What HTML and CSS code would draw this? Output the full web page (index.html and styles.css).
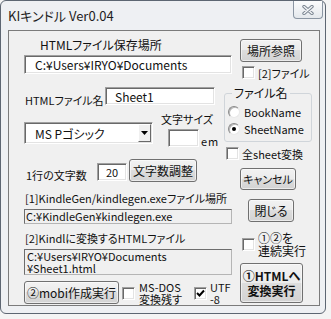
FILE: index.html
```html
<!DOCTYPE html>
<html lang="ja">
<head>
    <meta charset="UTF-8">
    <title>KIキンドル Ver0.04</title>
    <link rel="stylesheet" href="styles.css">
</head>
<body>
    <div class="window">
        <div class="titlebar">
            <span class="title">KIキンドル Ver0.04</span>
            <div class="close-btn">
                <svg width="12" height="10" viewBox="0 0 12 10">
                    <path d="M2 1.5 L10 8.5 M10 1.5 L2 8.5" stroke="#7b8591" stroke-width="3.4" stroke-linecap="round"/>
                    <path d="M2 1.5 L10 8.5 M10 1.5 L2 8.5" stroke="#f4f6f8" stroke-width="1.4" stroke-linecap="round"/>
                </svg>
            </div>
        </div>
        <div class="client">
            <div class="col-left">
                <div class="label save-label">HTMLファイル保存場所</div>
                <div class="textbox path-box">C:¥Users¥IRYO¥Documents</div>

                <div class="name-row">
                    <span class="label name-label">HTMLファイル名</span>
                    <div class="textbox name-box">Sheet1</div>
                </div>

                <div class="font-row">
                    <div class="textbox combo">
                        <span class="combo-text">MS Pゴシック</span>
                        <span class="combo-btn">
                            <svg width="7" height="4" viewBox="0 0 7 4"><polygon points="0,0 7,0 3.5,4" fill="#000"/></svg>
                        </span>
                    </div>
                    <div class="size-group">
                        <div class="label">文字サイズ</div>
                        <div class="size-row">
                            <div class="textbox size-box"></div>
                            <span class="em">em</span>
                        </div>
                    </div>
                </div>

                <div class="count-row">
                    <span class="label count-label">1行の文字数</span>
                    <div class="textbox count-box">20</div>
                    <button class="btn count-btn">文字数調整</button>
                </div>

                <div class="label kg-label">[1]KindleGen/kindlegen.exeファイル場所</div>
                <div class="readonly kg-box">C:¥KindleGen¥kindlegen.exe</div>

                <div class="label html-label">[2]Kindlに変換するHTMLファイル</div>
                <div class="readonly html-box">C:¥Users¥IRYO¥Documents<br>¥Sheet1.html</div>

                <div class="bottom-row">
                    <button class="btn mobi-btn">②mobi作成実行</button>
                    <label class="check-row dos-check">
                        <span class="check"></span>
                        <span class="two-line dos-text">MS-DOS<br>変換残す</span>
                    </label>
                    <label class="check-row utf-check">
                        <span class="check">
                            <svg width="9" height="9" viewBox="0 0 9 9"><polyline points="1,4 3.5,6.5 8,1.5" fill="none" stroke="#000" stroke-width="2"/></svg>
                        </span>
                        <span class="two-line">UTF<br>-8</span>
                    </label>
                </div>
            </div>

            <div class="col-right">
                <button class="btn browse-btn">場所参照</button>
                <label class="check-row file-check">
                    <span class="check"></span>
                    <span class="label">[2]ファイル</span>
                </label>

                <fieldset class="group">
                    <legend>ファイル名</legend>
                    <label class="radio-row first">
                        <span class="radio"></span>
                        <span>BookName</span>
                    </label>
                    <label class="radio-row">
                        <span class="radio checked"></span>
                        <span>SheetName</span>
                    </label>
                </fieldset>

                <label class="check-row all-check">
                    <span class="check"></span>
                    <span class="label">全sheet変換</span>
                </label>

                <button class="btn cancel-btn">キャンセル</button>
                <button class="btn shut-btn">閉じる</button>

                <label class="check-row serial-check">
                    <span class="check"></span>
                    <span class="two-line serial-text">①②を<br>連続実行</span>
                </label>

                <button class="btn html-btn">①HTMLへ<br>変換実行</button>
            </div>
        </div>
    </div>
</body>
</html>
```

FILE: styles.css
```css
body {
    margin: 0;
    background-color: #f4f4f4;
    font-family: "Noto Sans CJK JP", "Liberation Sans", sans-serif;
    font-size: 11px;
    font-feature-settings: "palt";
    color: #111;
}
.window {
    width: 326px;
    height: 314px;
    box-sizing: border-box;
    border: 1px solid #5d6672;
    border-radius: 6px;
    background-color: #eef0f3;
}
.titlebar {
    display: flex;
    height: 29px;
}
.title {
    margin: 7px 0 0 7px;
    line-height: 15px;
    font-size: 13px;
    color: #1e1e1e;
}
.close-btn {
    margin-left: auto;
    margin-right: 2px;
    width: 30px;
    height: 18px;
    box-sizing: border-box;
    border: 1px solid #8b96a3;
    border-top: none;
    border-radius: 0 0 4px 4px;
    background: linear-gradient(#fbfcfd, #e4e8ec);
    display: flex;
    align-items: center;
    justify-content: center;
}
.client {
    margin-left: 7px;
    width: 312px;
    height: 276px;
    box-sizing: border-box;
    border: 1px solid #7b7b7b;
    background-color: #f0f0f0;
    display: flex;
}
.col-left {
    margin-left: 15px;
    width: 200px;
    display: flex;
    flex-direction: column;
    align-items: flex-start;
}
.col-right {
    width: 88px;
    display: flex;
    flex-direction: column;
    align-items: flex-start;
}
.label {
    line-height: 14px;
    white-space: nowrap;
}

/* controls */
.textbox {
    box-sizing: border-box;
    background-color: #fff;
    border: 1px solid;
    border-color: #a0a0a0 #fff #fff #a0a0a0;
    box-shadow: inset 1px 1px 0 #696969, inset -1px -1px 0 #e3e3e3;
    white-space: nowrap;
    display: flex;
    align-items: center;
}
.readonly {
    box-sizing: border-box;
    background-color: #f0f0f0;
    border: 1px solid;
    border-color: #6d6d6d #b5b5b5 #b5b5b5 #6d6d6d;
    white-space: nowrap;
}
.btn {
    box-sizing: border-box;
    border: 1px solid #707070;
    border-radius: 3px;
    background: linear-gradient(#f2f2f2 0%, #ebebeb 49%, #dddddd 50%, #d3d3d3 100%);
    box-shadow: inset 0 0 0 1px rgba(255, 255, 255, 0.55);
    font: inherit;
    color: #111;
    padding: 0;
    white-space: nowrap;
}
.check-row {
    display: flex;
    align-items: center;
    white-space: nowrap;
}
.check {
    width: 13px;
    height: 13px;
    box-sizing: border-box;
    background-color: #fff;
    border: 1px solid;
    border-color: #a0a0a0 #fff #fff #a0a0a0;
    box-shadow: inset 1px 1px 0 #696969, inset -1px -1px 0 #e3e3e3;
    display: flex;
    align-items: center;
    justify-content: center;
    flex-shrink: 0;
}
.two-line {
    line-height: 12px;
}

/* left column */
.save-label {
    margin-top: 7px;
    padding-left: 16px;
    font-size: 12px;
}
.path-box {
    margin-top: 3px;
    width: 208px;
    height: 19px;
    padding-left: 10px;
    font-size: 12px;
}
.name-row {
    margin-top: 13px;
    display: flex;
}
.name-label {
    margin: 6px 0 0 1px;
    width: 80px;
}
.name-box {
    width: 110px;
    height: 18px;
    padding-left: 9px;
    font-size: 12px;
}
.font-row {
    margin-top: 5px;
    display: flex;
}
.combo {
    margin-top: 10px;
    width: 129px;
    height: 22px;
    padding-left: 10px;
    font-size: 12px;
}
.combo-text {
    flex: 1;
}
.combo-btn {
    width: 13px;
    height: 18px;
    margin-right: 1px;
    box-sizing: border-box;
    background-color: #f0f0f0;
    border: 1px solid;
    border-color: #fff #696969 #696969 #fff;
    display: flex;
    align-items: center;
    justify-content: center;
}
.size-group {
    margin-left: 8px;
}
.size-row {
    margin-top: 3px;
    display: flex;
    align-items: flex-end;
}
.size-box {
    margin-left: 7px;
    width: 31px;
    height: 18px;
}
.em {
    margin-left: 2px;
    line-height: 12px;
    letter-spacing: 1px;
}
.count-row {
    margin-top: 12px;
    display: flex;
    align-items: flex-start;
}
.count-label {
    margin: 9px 0 0 2px;
    width: 71px;
}
.count-box {
    margin-top: 4px;
    width: 30px;
    height: 18px;
    justify-content: center;
}
.count-btn {
    margin-left: 2px;
    width: 68px;
    height: 23px;
    font-size: 12px;
}
.kg-label {
    margin-top: 9px;
    padding-left: 1px;
}
.kg-box {
    margin-top: 4px;
    width: 208px;
    height: 15px;
    line-height: 13px;
    padding-left: 1px;
}
.html-label {
    margin-top: 7px;
    padding-left: 1px;
}
.html-box {
    margin-top: 4px;
    width: 208px;
    height: 26px;
    line-height: 12px;
    padding: 0 0 0 2px;
}
.bottom-row {
    margin-top: 6px;
    display: flex;
    align-items: flex-start;
}
.mobi-btn {
    width: 95px;
    height: 23px;
    font-size: 12px;
}
.dos-check {
    margin-left: 3px;
    align-items: flex-start;
}
.dos-check .check,
.utf-check .check {
    margin-top: 6px;
}
.dos-text {
    margin-left: 4px;
    width: 47px;
}
.utf-check {
    margin-left: 8px;
    align-items: flex-start;
}
.utf-check .two-line {
    margin-left: 3px;
}

/* right column */
.browse-btn {
    margin: 8px 0 0 16px;
    width: 62px;
    height: 23px;
    font-size: 12px;
}
.file-check {
    margin: 4px 0 0 18px;
    height: 13px;
}
.file-check .label,
.all-check .label {
    margin-left: 3px;
}
.group {
    margin: 7px 0 0 0;
    width: 88px;
    box-sizing: border-box;
    padding: 0 0 5px 0;
    border: 1px solid #d0d5da;
    border-radius: 3px;
}
.group legend {
    margin-left: 7px;
    padding: 0 2px;
    line-height: 14px;
    font-size: 12px;
}
.radio-row {
    display: flex;
    align-items: center;
    height: 14px;
    margin: 3px 0 0 3px;
    white-space: nowrap;
}
.radio-row.first {
    margin-top: 5px;
}
.radio {
    width: 12px;
    height: 12px;
    box-sizing: border-box;
    margin-right: 4px;
    border-radius: 50%;
    background-color: #fff;
    border: 1px solid;
    border-color: #8a8a8a #e8e8e8 #e8e8e8 #8a8a8a;
    box-shadow: inset 1px 1px 0 #b8b8b8;
    display: flex;
    align-items: center;
    justify-content: center;
}
.radio.checked::after {
    content: "";
    width: 4px;
    height: 4px;
    border-radius: 50%;
    background-color: #000;
}
.all-check {
    margin: 5px 0 0 2px;
    height: 13px;
}
.cancel-btn {
    margin: 8px 0 0 16px;
    width: 56px;
    height: 22px;
}
.shut-btn {
    margin: 9px 0 0 24px;
    width: 46px;
    height: 23px;
    font-size: 12px;
}
.serial-check {
    margin: 9px 0 0 18px;
}
.serial-text {
    margin-left: 3px;
    line-height: 13px;
    font-size: 12px;
}
.html-btn {
    margin: 6px 0 0 16px;
    width: 63px;
    height: 40px;
    font-size: 12px;
    font-weight: bold;
    line-height: 15px;
}
```
